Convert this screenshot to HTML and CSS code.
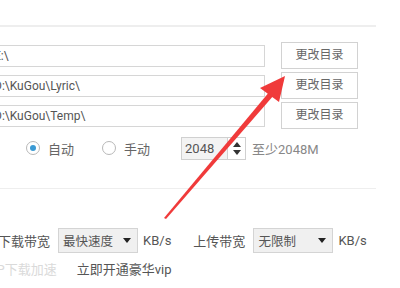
FILE: index.html
```html
<!DOCTYPE html>
<html lang="zh">
<head>
<meta charset="utf-8">
<link rel="stylesheet" href="styles.css">
</head>
<body>
<div class="page">
  <div class="topline"></div>
  <div class="paths">
    <div class="row">
      <div class="field">E:\</div>
      <div class="btn">更改目录</div>
    </div>
    <div class="row">
      <div class="field">D:\KuGou\Lyric\</div>
      <div class="btn">更改目录</div>
    </div>
    <div class="row">
      <div class="field">D:\KuGou\Temp\</div>
      <div class="btn">更改目录</div>
    </div>
  </div>
  <div class="cache">
    <span class="radio on"></span><span class="rlabel">自动</span>
    <span class="radio"></span><span class="rlabel">手动</span>
    <span class="num">2048</span><span class="spin"><span class="up"></span><span class="down"></span></span>
    <span class="hint">至少2048M</span>
  </div>
  <div class="sep"></div>
  <div class="bw">
    <span class="lbl first">下载带宽</span>
    <span class="sel">最快速度<span class="tri"></span></span>
    <span class="unit">KB/s</span>
    <span class="lbl up2">上传带宽</span>
    <span class="sel">无限制<span class="tri"></span></span>
    <span class="unit">KB/s</span>
  </div>
  <div class="vip">
    <span class="faded">P2P下载加速</span>
    <span class="link">立即开通豪华vip</span>
  </div>
  <svg class="arrow" width="400" height="288" viewBox="0 0 400 288">
    <polygon points="164,218 270,91 274,95 166,219" fill="#f03a3a"/>
    <polygon points="285,76 260,88 279,102" fill="#f03a3a"/>
  </svg>
</div>
</body>
</html>
```
FILE: styles.css
```css
html, body { margin: 0; padding: 0; background: #fff; }
.page {
  position: relative;
  width: 400px;
  height: 288px;
  overflow: hidden;
  font-family: Roboto, "Noto Sans CJK SC", sans-serif;
  font-size: 13px;
  color: #555;
}
.topline {
  margin-top: 25px;
  width: 376px;
  height: 2px;
  background: #eeeeee;
}
.paths {
  margin-top: 15px;
  display: flex;
  flex-direction: column;
  gap: 3px;
}
.row {
  display: flex;
  align-items: center;
  height: 27px;
}
.field {
  box-sizing: border-box;
  margin-left: -30px;
  width: 295px;
  height: 22px;
  border: 1px solid #d6d6d6;
  padding-left: 23px;
  line-height: 20px;
  font-size: 12px;
  color: #555;
  white-space: nowrap;
}
.btn {
  box-sizing: border-box;
  margin-left: 16px;
  width: 77px;
  height: 27px;
  border: 1px solid #d2d2d2;
  background: #fff;
  color: #666;
  font-size: 12px;
  text-align: center;
  line-height: 25px;
}
.cache {
  margin-top: 7px;
  height: 24px;
  display: flex;
  align-items: center;
}
.radio {
  box-sizing: border-box;
  width: 14px;
  height: 14px;
  border: 1px solid #b8b8b8;
  border-radius: 50%;
  margin-left: 26px;
  display: flex;
  align-items: center;
  justify-content: center;
}
.radio + .rlabel + .radio { margin-left: 28px; }
.radio.on::after {
  content: "";
  width: 6px;
  height: 6px;
  border-radius: 50%;
  background: #3b9ad4;
}
.rlabel {
  margin-left: 8px;
  color: #666;
}
.num {
  box-sizing: border-box;
  margin-left: 31px;
  width: 47px;
  height: 23px;
  border: 1px solid #d0d0d0;
  background: #f3f3f3;
  padding-left: 3px;
  line-height: 21px;
  color: #555;
}
.spin {
  box-sizing: border-box;
  width: 18px;
  height: 23px;
  border: 1px solid #d0d0d0;
  border-left: none;
  display: flex;
  flex-direction: column;
  align-items: center;
  justify-content: center;
  gap: 3px;
}
.spin .up {
  width: 0; height: 0;
  border-left: 4px solid transparent;
  border-right: 4px solid transparent;
  border-bottom: 5px solid #333;
}
.spin .down {
  width: 0; height: 0;
  border-left: 4px solid transparent;
  border-right: 4px solid transparent;
  border-top: 5px solid #333;
}
.hint {
  margin-left: 6px;
  color: #888;
}
.sep {
  margin-top: 28px;
  width: 376px;
  height: 1px;
  background: #eeeeee;
}
.bw {
  margin-top: 38px;
  height: 26px;
  display: flex;
  align-items: center;
}
.lbl { color: #555; }
.lbl.first { margin-left: -2px; }
.lbl.up2 { margin-left: 22px; }
.sel {
  box-sizing: border-box;
  margin-left: 8px;
  width: 80px;
  height: 25px;
  border: 1px solid #d4d4d4;
  background: #f0f0f0;
  padding-left: 4px;
  display: flex;
  align-items: center;
  justify-content: space-between;
  padding-right: 6px;
  color: #555;
  font-size: 12.5px;
}
.tri {
  width: 0; height: 0;
  border-left: 4px solid transparent;
  border-right: 4px solid transparent;
  border-top: 5px solid #222;
}
.unit {
  margin-left: 5px;
  color: #555;
}
.vip {
  margin-top: 4px;
  height: 22px;
  display: flex;
  align-items: center;
}
.faded {
  margin-left: -19px;
  color: #dadada;
}
.link {
  margin-left: 20px;
  color: #555;
}
.arrow {
  position: absolute;
  left: 0;
  top: 0;
}
```
